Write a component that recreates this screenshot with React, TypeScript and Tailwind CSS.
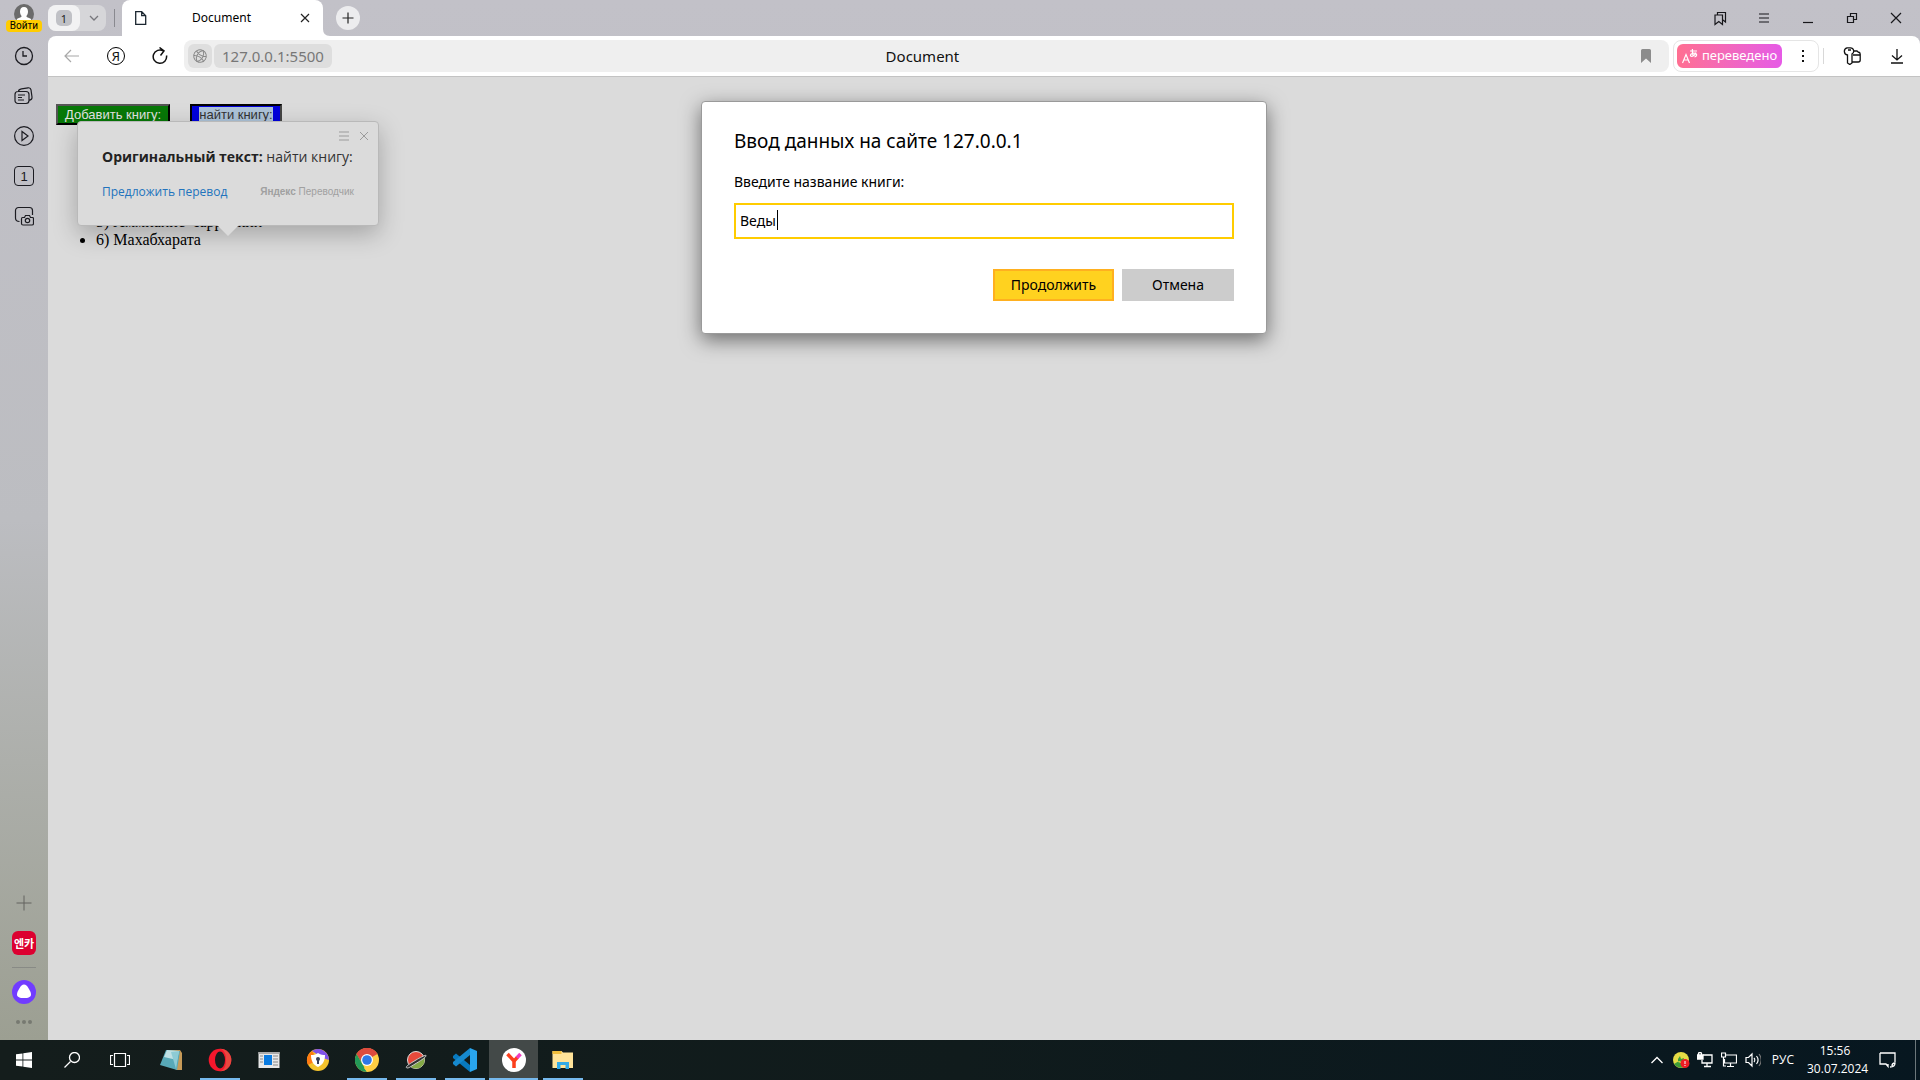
import React from "react";

type IconProps = { d: string; size?: number; className?: string; w?: number; fill?: string; children?: React.ReactNode };

function Icon({ d, size = 20, className = "", w = 1, fill = "none", children }: IconProps) {
  return (
    <svg width={size} height={size} viewBox={`0 0 ${size} ${size}`} fill={fill} stroke="currentColor" strokeWidth={w} className={className} aria-hidden="true">
      <path d={d} />
      {children}
    </svg>
  );
}

function Sidebar() {
  return (
    <aside className="flex w-12 shrink-0 flex-col items-center text-[#1c1c22]">
      <button aria-label="Войти" className="relative flex h-8 w-9 shrink-0 justify-center pt-1">
        <svg width="20" height="20" viewBox="0 0 20 20" aria-hidden="true">
          <circle cx="10" cy="10" r="10" fill="#6b6b6b" />
          <path d="M10 3c2.700 0 4 2 4 4.500 0 2-.8 3.500-1.600 4.500 0 2 3.600 1.500 5 3.500A10 10 0 0 1 2.600 15.500c1.400-2 5-1.500 5-3.500C6.800 11 6 9.500 6 7.500 6 5 7.300 3 10 3z" fill="#fff" />
        </svg>
        <span className="absolute bottom-0 left-0 h-3 w-9 rounded bg-[#ffcc00] text-center font-['Roboto',sans-serif] text-[10px] leading-3 text-black">Войти</span>
      </button>
      <nav className="mt-3.5 flex flex-col items-center gap-5">
        <button aria-label="История"><Icon d="M9 5v5h4" w={1.300}><circle cx="10" cy="10" r="8.500" /></Icon></button>
        <button aria-label="Лента"><Icon d="M4 5.500h8a3 3 0 0 1 3 3v6a3 3 0 0 1-3 3H4a3 3 0 0 1-3-3v-6a3 3 0 0 1 3-3zM4.500 5.500C4.500 3.500 6 3 7.500 2.800l6.500-1c2-.3 2.800.7 3 2l1 7.200c.2 2-1 3-3 3.300M4 9h7M4 11.500h4M4 14h6" w={1.200} /></button>
        <button aria-label="Видео"><Icon d="M8 5.500v9l6-4.500z" w={1.200}><circle cx="10" cy="10" r="9.400" /></Icon></button>
        <button aria-label="Вкладки" className="grid size-5 place-items-center rounded border border-[#1c1c22] font-['Liberation_Sans',sans-serif] text-[13px] leading-none">1</button>
        <button aria-label="Скриншот"><Icon d="M5.500 15.500C3 15.500 1.500 14.500 1.500 12V4.500a3 3 0 0 1 3-3h11a3 3 0 0 1 3 3V9M8.500 11.500h2l1-2h4l1 2h2q1 0 1 1v5q0 1.500-1.500 1.500h-9q-1.500 0-1.500-1.500v-4.500q0-1.500 1-1.500z" w={1.200}><circle cx="13.500" cy="14.500" r="2.200" /></Icon></button>
      </nav>
      <div className="mt-auto flex flex-col items-center pb-1">
        <button aria-label="Добавить" className="text-[#62635f]"><Icon size={16} d="M8 .5v15M.5 8h15" w={1} /></button>
        <button className="mt-5 grid size-6 place-items-center rounded-md bg-[#dc0030] font-['Noto_Sans_CJK_KR',sans-serif] text-[11px] leading-none font-bold text-white">엔카</button>
        <span className="mt-3 h-px w-6 bg-[#888a85]" />
        <button aria-label="Алиса" className="mt-3">
          <svg width="24" height="24" viewBox="0 0 24 24" aria-hidden="true">
            <circle cx="12" cy="12" r="12" fill="#713cff" />
            <path d="M12 4.500c2 0 3 1.200 4.400 3.500 1.600 2.700 2.600 4.800 2.600 6.400C19 17.200 16 18 12 18s-7-.8-7-3.600c0-1.600 1-3.700 2.600-6.400C9 5.700 10 4.500 12 4.500z" fill="#fff" />
          </svg>
        </button>
        <button aria-label="Ещё" className="mt-4 flex h-4 items-start gap-0.5">
          <span className="size-1 rounded-full bg-[#777971]" />
          <span className="size-1 rounded-full bg-[#777971]" />
          <span className="size-1 rounded-full bg-[#777971]" />
        </button>
      </div>
    </aside>
  );
}

function TabStrip() {
  return (
    <header className="flex h-9 shrink-0 items-center">
      <div className="flex h-[26px] w-[58px] items-center rounded-lg bg-[#d6d6d9]">
        <button className="grid h-[26px] w-8 place-items-center rounded-lg bg-[#f2f2f3]">
          <span className="grid size-4 place-items-center rounded-[5px] bg-[#c0c1c6] text-[11px] leading-none text-[#222]">1</span>
        </button>
        <button aria-label="Список групп" className="ml-2 text-[#77777c]"><Icon size={12} d="M2 4l4 4 4-4" w={1.300} /></button>
      </div>
      <span className="ml-2 h-[18px] w-px bg-[#89898f]" />
      <div className="relative ml-[7px] flex h-9 w-[201px] items-center rounded-t-lg bg-white px-3">
        <Icon size={14} className="text-[#1b2630]" d="M1.700 .7h6l4 4v8.600h-10zM7.700 .7v4h4" w={1.300} />
        <span className="flex-1 pr-1 text-center text-xs text-black">Document</span>
        <button aria-label="Закрыть вкладку" className="text-[#222]"><Icon size={12} d="M2 2l8 8M10 2l-8 8" w={1.200} /></button>
        <svg className="absolute bottom-0 left-full" width="7" height="7" viewBox="0 0 7 7" aria-hidden="true"><path d="M0 0q0 7 7 7H0z" fill="#fff" /></svg>
      </div>
      <button aria-label="Новая вкладка" className="ml-[13px] grid size-6 place-items-center rounded-full bg-[#ececee] text-[#222]"><Icon size={12} d="M6 .5v11M.5 6h11" w={1.200} /></button>
      <div className="ml-auto flex items-center gap-8 pr-[18px] text-[#17171b]">
        <button aria-label="Коллекции"><Icon size={12} className="overflow-visible" d="M1 3h7.500v9.500l-3.700-3-3.800 3zM3.500 3V.5h8v9.500l-2.500-2" w={1.200} /></button>
        <button aria-label="Меню"><Icon size={12} d="M1 2h10M1 6h10M1 10h10" w={1.200} /></button>
        <button aria-label="Свернуть"><Icon size={12} d="M1 10.500h10" w={1.200} /></button>
        <button aria-label="Восстановить"><Icon size={12} d="M1.500 4.500h6v6h-6zM4.500 4.500v-3h6v6h-3" w={1.200} /></button>
        <button aria-label="Закрыть"><Icon size={12} d="M1 1l10 10M11 1L1 11" w={1.200} /></button>
      </div>
    </header>
  );
}

function Toolbar() {
  return (
    <div className="flex h-[41px] shrink-0 items-center rounded-t-lg border-b border-[#c3c3c3] bg-white pl-4 text-[#111]">
      <button aria-label="Назад" className="text-[#a8a8a8]"><Icon size={16} d="M15 8H1M7 2L1 8l6 6" w={1.200} /></button>
      <button className="ml-[27px] grid size-[18px] place-items-center rounded-full border border-black text-[13px] leading-none">Я</button>
      <button aria-label="Обновить" className="ml-[26px]"><Icon size={18} d="M15.500 8.500a6.700 6.700 0 1 1-3-4.500M8.500 .5L13 4l-3.500 4.500" w={1.500} /></button>
      <div className="ml-[15px] flex h-8 flex-1 items-center rounded-lg bg-[#efefef] px-1">
        <button aria-label="Сведения о сайте" className="grid size-6 place-items-center rounded-md bg-[#dedede] text-[#8a8a8a]">
          <Icon size={14} d="M7 .7C3 4 3 10 7 13.300M7 .7C11 4 11 10 7 13.300M1.500 4.500c3 2 8 2 11 0M1.500 9.500c3-2 8-2 11 0" className="rotate-30"><circle cx="7" cy="7" r="6.300" /></Icon>
        </button>
        <button className="ml-0.5 h-6 rounded-md bg-[#dedede] px-2 text-[15px] leading-6 text-[#777]">127.0.0.1:5500</button>
        <span className="flex-1 pr-32 text-center text-[15px] leading-6 text-[#111]">Document</span>
        <button aria-label="В закладки" className="mr-3.5"><svg width="10" height="14" viewBox="0 0 10 14" aria-hidden="true"><path d="M0 1.500Q0 0 1.500 0h7Q10 0 10 1.500V14L5 9.500 0 14z" fill="#8c8c8c" /></svg></button>
      </div>
      <div className="ml-1 flex h-8 w-[146px] items-center rounded-lg border border-[#e5e5e5] pl-[3px]">
        <button className="flex h-6 w-[105px] items-center justify-center gap-1 rounded-md bg-linear-to-r from-[#ff6f91] to-[#e65ae6] text-[13px] text-white">
          <svg width="16" height="16" viewBox="0 0 16 16" fill="none" stroke="#fff" strokeWidth="1.200" aria-hidden="true">
            <path d="M.5 15L4 6.500 7.500 15M1.700 12h4.600M8 3h7M10.500 1c-.5 3 0 5 .8 7M14 4.500c-1 3-4 4.500-5.300 3.500-1-1.500 2-3.500 4.300-2.800 2.500.8 2 3-.5 3.800" />
          </svg>
          переведено
        </button>
        <button aria-label="Параметры перевода" className="ml-[17px]"><svg width="8" height="14" viewBox="0 0 8 14" aria-hidden="true"><path d="M3 1h2v2H3zM3 6h2v2H3zM3 11h2v2H3z" fill="#111" /></svg></button>
      </div>
      <span className="ml-1 h-4 w-px bg-[#d8d8d8]" />
      <button aria-label="Пароли" className="ml-[19px]"><Icon size={18} d="M4 .8h3.500A3.300 3.300 0 0 1 9 7v9l-2.200 1.500L4.500 16V8A3.700 3.700 0 0 1 4 .8zM5 3h3M10.500 4h3.500l1 1q2.200.3 2.200 2v6q0 2-2 2h-5.700M10 8h7" w={1.300} /></button>
      <button aria-label="Загрузки" className="mr-[15px] ml-[28px]"><Icon size={16} d="M8 1v11M3 7.500L8 12l5-4.500M2 15h12" w={1.300} /></button>
    </div>
  );
}

function TranslatePopup() {
  return (
    <div className="absolute top-[44px] left-[29px] h-[105px] w-[302px] rounded-sm border border-[#b9b9b9] bg-[#dbdbdb] px-6 font-['Open_Sans',sans-serif] whitespace-nowrap shadow-[0_8px_24px_rgba(0,0,0,0.25)]">
      <div className="-mr-4 flex h-5 items-end justify-end gap-2 text-[#9b9b9b]">
        <button aria-label="Меню перевода"><Icon size={12} d="M1 2h10M1 6h10M1 10h10" /></button>
        <button aria-label="Закрыть перевод"><Icon size={12} d="M2 2l8 8M10 2l-8 8" /></button>
      </div>
      <p className="mt-[3px] text-sm leading-6 text-[#333]"><b className="font-bold text-[#222]">Оригинальный текст:</b> найти книгу:</p>
      <div className="mt-[11px] flex items-center justify-between leading-6">
        <a href="#translate" className="text-xs leading-6 text-[#2173bd]">Предложить перевод</a>
        <span className="font-['Liberation_Sans_Narrow','Liberation_Sans',sans-serif] text-[10px] leading-6 text-[#a0a0a0]"><b>Яндекс</b> Переводчик</span>
      </div>
      <svg className="absolute top-full left-[139px]" width="22" height="11" viewBox="0 0 22 11" aria-hidden="true"><path d="M0 0h22L11 11z" fill="#dbdbdb" /></svg>
    </div>
  );
}

function PromptDialog() {
  return (
    <form role="dialog" aria-label="Ввод данных на сайте" className="absolute top-[24px] left-1/2 flex h-[233px] w-[566px] -translate-x-1/2 flex-col rounded-sm border border-[#9a9a9a] bg-white px-8 text-black shadow-[0_6px_20px_rgba(0,0,0,0.5)]">
      <h1 className="mt-[25px] text-[19px] leading-7">Ввод данных на сайте 127.0.0.1</h1>
      <label htmlFor="book" className="mt-[15px] text-sm leading-6">Введите название книги:</label>
      <div className="relative mt-[9px] flex">
        <input id="book" defaultValue="Веды" className="h-9 flex-1 border-2 border-[#ffcc00] px-1 pb-0.5 text-sm outline-none" />
        <span className="absolute top-[7px] left-[43px] h-5 w-px bg-black" />
      </div>
      <div className="mt-[30px] flex justify-end gap-2 text-sm">
        <button type="button" className="h-8 w-[121px] border-2 border-[#ffb01f] bg-[#ffd21f]">Продолжить</button>
        <button type="button" className="h-8 w-28 bg-[#ccc]">Отмена</button>
      </div>
    </form>
  );
}

function Page() {
  return (
    <main className="relative flex-1 bg-[#dbdbdb] px-2 pt-[27px]">
      <div className="flex gap-5 font-['Liberation_Sans',sans-serif] text-[13px] leading-4">
        <button className="h-[21px] w-[114px] border-2 border-t-[#555] border-r-black border-b-black border-l-[#555] bg-[#077807] text-[#e4e4e4]">Добавить книгу:</button>
        <button className="h-[21px] w-[92px] border-2 border-t-black border-r-[#444] border-b-[#444] border-l-black bg-[#0000dc] text-[#333]"><span className="bg-[#adc3d8]">найти книгу:</span></button>
      </div>
      <ul className="mt-[88px] list-disc pl-10 font-['Liberation_Serif',serif] text-base leading-[18px] text-black">
        <li>5) Аммианис Чарраккин</li>
        <li>6) Махабхарата</li>
      </ul>
      <TranslatePopup />
      <PromptDialog />
    </main>
  );
}

const apps: { name: string; open?: boolean; active?: boolean; art: React.ReactNode }[] = [
  { name: "Блокнот", art: <><path d="M8 2h13l2 3v17h-6z" fill="#c79a58" /><path d="M7 2l14 1-3 19L1 17z" fill="#58a9b8" /><path d="M8 2l12 1-2 9-13-3z" fill="#bfe0e4" /><path d="M12 4l8-1-3 18z" fill="#8dcbd5" /></> },
  { name: "Opera", open: true, art: <><circle cx="12" cy="12" r="11.300" fill="#f5172c" /><path d="M12 .7a11.300 11.300 0 0 1 0 22.600c4-1 6-5 6-11.300S16 1.700 12 .7z" fill="#e9473f" /><ellipse cx="12" cy="12" rx="5" ry="8.500" fill="#161d1d" /></> },
  { name: "Панель", art: <><path d="M1.500 4h21v16h-21z" fill="#e8e8e8" /><path d="M1.500 4h21v2h-21z" fill="#aaa" /><path d="M7 7h8v10H7z" fill="#0a7be0" /><path d="M3 8h3M3 11h3M3 14h3M16 8h5M16 11h5M16 14h5M16 17h5" stroke="#888" /></> },
  { name: "Secure Browser", art: <><circle cx="12" cy="12" r="11" fill="#f4c32c" /><path d="M12 12L2 17A11 11 0 0 1 6 3z" fill="#ff7a12" /><path d="M6 3a11 11 0 0 1 17 9l-6-2z" fill="#8052e8" /><path d="M12 5c3 2 5 2 7 2 0 7-3 10-7 12C8 17 5 14 5 7c2 0 4 0 7-2z" fill="#fff" /><circle cx="12" cy="11" r="2" fill="#333b56" /><path d="M11 11h2v5h-2z" fill="#333b56" /></> },
  { name: "Chrome", open: true, art: <><circle cx="12" cy="12" r="12" fill="#ffce43" /><path d="M12 12L1.600 6A12 12 0 0 1 22.400 6z" fill="#dd4b3e" /><path d="M1.600 6l5.200 9L12 24A12 12 0 0 1 1.600 6z" fill="#239957" /><path d="M1.600 6L7 15l5-9z" fill="#239957" /><path d="M1.600 6A12 12 0 0 1 22.400 6H12l-5 3.500-1.500 3z" fill="#dd4b3e" /><path d="M12 24l5.200-9L16 12l-7 8z" fill="#ffce43" /><circle cx="12" cy="12" r="6" fill="#fff" /><circle cx="12" cy="12" r="4.800" fill="#2e78e8" /></> },
  { name: "Planet", open: true, art: <><circle cx="12" cy="12" r="8.500" fill="#e84a3c" stroke="#ddd" /><path d="M20 9a8.500 8.500 0 0 1-14 9z" fill="#83a946" /><path d="M3 20c-3-1 4-5 9-8s11-6 10-4-6 5-11 8-6 4-8 4z" fill="#333" stroke="#ccc" /></> },
  { name: "VS Code", open: true, art: <><path d="M17 0l7 3v18l-7 3z" fill="#29a5ee" /><path d="M0 8l3-2.500L17 17v7L0 10z" fill="#0879be" /><path d="M0 16l3 2.500L17 7V0L0 14z" fill="#1689ce" /></> },
  { name: "Яндекс Браузер", open: true, active: true, art: <><circle cx="12" cy="12" r="12" fill="#fff" /><path d="M12 20v-7L5.500 6" stroke="#fc3f1d" strokeWidth="3.500" fill="none" /><path d="M12 13l3.500-3.800" stroke="#fc3f1d" strokeWidth="3.500" /><path d="M15 9.800L18.500 6" stroke="#ef3dc0" strokeWidth="3.500" /></> },
  { name: "Проводник", open: true, art: <><path d="M1.500 3h9l1.500 1.500h10V20h-20.500z" fill="#ffe399" /><path d="M1.500 3h9v3h-9z" fill="#f0bd3c" /><path d="M6 21v-7h12v7h-3.500v-4h-5v4z" fill="#32abe8" /></> },
];

function Taskbar() {
  return (
    <footer className="flex h-10 shrink-0 items-center bg-linear-to-r from-[#141d1c] via-[#101b1c] to-[#071720] text-white">
      <button aria-label="Пуск" className="grid h-10 w-12 place-items-center"><svg width="16" height="16" viewBox="0 0 16 16" aria-hidden="true"><path d="M0 2.300L6.500 1.400V7.600H0zM7.300 1.300L16 0v7.600H7.300zM0 8.400h6.500v6.200L0 13.700zM7.300 8.400H16V16l-8.700-1.300z" fill="#fff" /></svg></button>
      <button aria-label="Поиск" className="grid h-10 w-12 place-items-center"><Icon size={16} d="M6.500 9.500L.5 15.500" w={1.300}><circle cx="10.500" cy="5.500" r="5" /></Icon></button>
      <button aria-label="Представление задач" className="grid h-10 w-12 place-items-center"><Icon size={20} d="M4.500 3.500h11v13h-11zM3 5.500H.5v9H3M17 5.500h2.500v9H17" w={1.200} /></button>
      <div className="ml-0.5 flex">
        {apps.map((a) => (
          <button key={a.name} aria-label={a.name} className={a.active ? "relative grid h-10 w-[49px] place-items-center bg-[#434948]" : "relative grid h-10 w-[49px] place-items-center"}>
            <svg width="24" height="24" viewBox="0 0 24 24" aria-hidden="true">{a.art}</svg>
            {a.open && <span className={a.active ? "absolute bottom-0 h-0.5 w-full bg-[#76b9ed]" : "absolute bottom-0 h-0.5 w-10 bg-[#76b9ed]"} />}
          </button>
        ))}
      </div>
      <div className="ml-auto flex items-center font-['Open_Sans',sans-serif] text-xs">
        <button aria-label="Скрытые значки"><Icon size={14} d="M1.500 10L7 4.500l5.500 5.500" w={1.300} /></button>
        <svg className="ml-[9px]" width="18" height="16" viewBox="0 0 18 16" aria-hidden="true"><circle cx="8" cy="8" r="8" fill="#e5dc45" /><path d="M1 12a8 8 0 0 0 10 3l-2-5-3-1zM5 7l2-3 1 3 3-1-1 3 2 1-4 1-3-1z" fill="#3c9c38" /><circle cx="12" cy="11.500" r="4.500" fill="#ed1c24" /><path d="M12 9v3M12 13v1" stroke="#fff" /></svg>
        <Icon size={16} className="ml-1.5" d="M6 3h9v8H5V8M10 11v3M7 14.500h7M1.500 3V1.500q0-1 1.500-1t1.500 1V3" w={1.300}><path d="M.5 3H6v4H.5z" fill="#fff" /></Icon>
        <Icon size={16} className="ml-2" d="M5 3h10.500v8H3.500V7M9.500 11v3M6 14.500h7M.5 1h4v4h-4zM2.500 5v9H5" w={1.200} />
        <Icon size={16} className="ml-2" d="M1 5.500h2.500L7 2v12l-3.500-3.500H1zM9 6c1 1 1 3 0 4M11.500 4c2 2.500 2 5.500 0 8" w={1.200}><path d="M14 2c3 4 3 8 0 12" stroke="#777" /></Icon>
        <button className="ml-[11px] text-xs">РУС</button>
        <time className="ml-[13px] w-[56px] text-center text-xs leading-[18px] whitespace-nowrap">15:56<br />30.07.2024</time>
        <button aria-label="Уведомления" className="ml-4"><Icon size={18} d="M1 2h15v9M1 2v11h6l2 2.500V13M11 16c3 0 5-1 5-4-2 0-3 1-3 3" w={1.300} /></button>
        <span className="mr-1 ml-[18px] h-10 w-px bg-[#6c777b]" />
      </div>
    </footer>
  );
}

export default function App() {
  return (
    <div className="flex h-screen flex-col overflow-hidden bg-white font-['Noto_Sans',sans-serif]">
      <div className="flex min-h-0 flex-1 bg-linear-to-b from-[#c2c1c8] via-[#bcbdc1] to-[#9c9f92]">
        <Sidebar />
        <div className="flex min-w-0 flex-1 flex-col">
          <TabStrip />
          <Toolbar />
          <Page />
        </div>
      </div>
      <Taskbar />
    </div>
  );
}
